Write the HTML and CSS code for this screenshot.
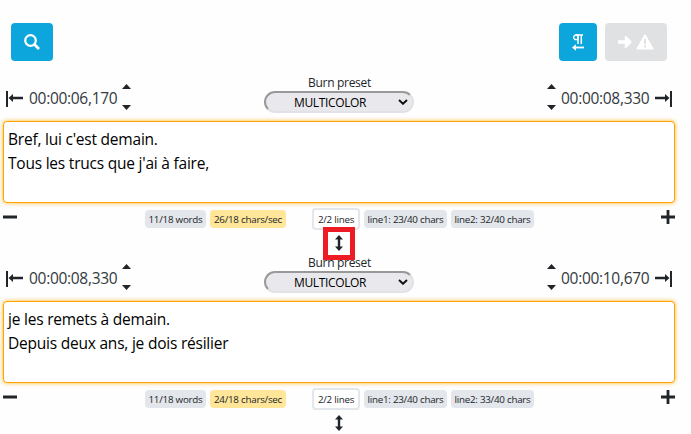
FILE: index.html
```html
<!DOCTYPE html>
<html lang="fr">
<head>
<meta charset="utf-8">
<title>Subtitles</title>
<link rel="stylesheet" href="styles.css">
</head>
<body>
<svg class="defs" width="0" height="0">
  <symbol id="start" viewBox="0 0 18 18"><path d="M2 2v16" stroke="#212529" stroke-width="2"/><path d="M3.500 9l4.500-4v2.800h10v2.500H8V13z" fill="#212529"/></symbol>
  <symbol id="end" viewBox="0 0 18 18"><path d="M17 2v16" stroke="#212529" stroke-width="2"/><path d="M15.500 9L11 5v2.800H1v2.500h10V13z" fill="#212529"/></symbol>
  <symbol id="carets" viewBox="0 0 9 26"><path d="M0 5L4.500 0 9 5zM0 21h9l-4.500 5z" fill="#212529"/></symbol>
  <symbol id="chev" viewBox="0 0 10 6"><path d="M1 1l4 3.800L9 1" fill="none" stroke="#111" stroke-width="1.900"/></symbol>
  <symbol id="updown" viewBox="0 0 8 16"><path d="M4 0l4 4.500H5.200v7H8L4 16 0 11.500h2.800v-7H0z" fill="#212529"/></symbol>
  <symbol id="minus" viewBox="0 0 14 14"><path d="M0 7h14" stroke="#212529" stroke-width="3"/></symbol>
  <symbol id="plus" viewBox="0 0 14 14"><path d="M0 7h14M7 0v14" stroke="#212529" stroke-width="2.800"/></symbol>
</svg>
<header class="toolbar">
  <button class="btn search" aria-label="Search"><svg width="16" height="16" viewBox="0 0 16 16" fill="none" stroke="#fff"><circle cx="6.500" cy="6.500" r="5.300" stroke-width="2.200"/><path d="M10.500 10.500l4.500 4.500" stroke-width="2.800"/></svg></button>
  <button class="btn para" aria-label="Paragraph"><svg width="12" height="17" viewBox="0 0 12 17" fill="none" stroke="#fff"><path d="M3.500 1H11M6 1v9M9.300 1v9" stroke-width="1.500"/><path d="M6 1H4a2.300 2.300 0 0 0 0 4.600h2z" stroke-width="1.300"/><path d="M3 13.500h9" stroke-width="1.800"/><path d="M0 13.500l4-3.200v6.400z" fill="#fff" stroke="none"/></svg></button>
  <button class="btn next" aria-label="Next warning"><svg width="14" height="14" viewBox="0 0 14 14"><path d="M0 5.200h6.800V1.200q.4-1 1.400-.2L14 7l-5.800 6q-1 .8-1.400-.2V8.800H0z" fill="#fff"/></svg><svg width="18" height="16" viewBox="0 0 18 16"><path d="M9 1.200l7.800 13.600H1.200z" fill="#fff" stroke="#fff" stroke-width="1.600" stroke-linejoin="round"/><path d="M9 5v5M9 11.500v2" stroke="#e0e1e3" stroke-width="2"/></svg></button>
</header>
<main>
  <section class="cue">
    <div class="head">
      <div class="time"><svg width="18" height="18"><use href="#start"/></svg><span class="code">00:00:06,170</span><svg class="carets" width="9" height="26"><use href="#carets"/></svg></div>
      <div class="preset"><span class="label">Burn preset</span><div class="select"><span>MULTICOLOR</span><svg width="10" height="6"><use href="#chev"/></svg></div></div>
      <div class="time right"><svg class="carets" width="9" height="26"><use href="#carets"/></svg><span class="code">00:00:08,330</span><svg width="18" height="18"><use href="#end"/></svg></div>
    </div>
    <div class="text">Bref, lui c'est demain.<br>Tous les trucs que j'ai à faire,</div>
    <div class="foot">
      <svg class="adjust" width="14" height="14"><use href="#minus"/></svg>
      <span class="badge words">11/18 words</span><span class="badge rate">26/18 chars/sec</span><span class="badge lines">2/2 lines</span><span class="badge line">line1: 23/40 chars</span><span class="badge line">line2: 32/40 chars</span>
      <svg class="adjust last" width="14" height="14"><use href="#plus"/></svg>
    </div>
    <div class="swap"><svg width="8" height="16"><use href="#updown"/></svg><i class="marker"></i></div>
  </section>
  <section class="cue">
    <div class="head">
      <div class="time"><svg width="18" height="18"><use href="#start"/></svg><span class="code">00:00:08,330</span><svg class="carets" width="9" height="26"><use href="#carets"/></svg></div>
      <div class="preset"><span class="label">Burn preset</span><div class="select"><span>MULTICOLOR</span><svg width="10" height="6"><use href="#chev"/></svg></div></div>
      <div class="time right"><svg class="carets" width="9" height="26"><use href="#carets"/></svg><span class="code">00:00:10,670</span><svg width="18" height="18"><use href="#end"/></svg></div>
    </div>
    <div class="text">je les remets à demain.<br>Depuis deux ans, je dois résilier</div>
    <div class="foot">
      <svg class="adjust" width="14" height="14"><use href="#minus"/></svg>
      <span class="badge words">11/18 words</span><span class="badge rate">24/18 chars/sec</span><span class="badge lines">2/2 lines</span><span class="badge line">line1: 23/40 chars</span><span class="badge line">line2: 33/40 chars</span>
      <svg class="adjust last" width="14" height="14"><use href="#plus"/></svg>
    </div>
    <div class="swap"><svg width="8" height="16"><use href="#updown"/></svg></div>
  </section>
</main>
</body>
</html>
```
FILE: styles.css
```css
* { box-sizing: border-box; }
body { margin: 0; height: 434px; overflow: hidden; background: #fefefe; color: #212529; font-family: "Open Sans", "Noto Sans", sans-serif; }
svg { display: block; flex: none; }
.defs { position: absolute; }
.toolbar { display: flex; height: 72px; padding: 23px 24px 0 11px; }
.btn { display: flex; align-items: center; justify-content: center; height: 38px; padding: 0; border: 0; border-radius: 4px; background: #0ca6dc; }
.search { width: 42px; }
.para { width: 38px; margin-left: auto; }
.next { width: 62px; margin-left: 8px; gap: 4px; background: #e0e1e3; }
.cue { height: 180px; }
.head { display: flex; justify-content: space-between; height: 49px; width: 678px; padding: 0 5px; }
.time { display: flex; align-items: center; height: 52px; width: 126px; }
.code { width: 88px; margin-left: 6px; font-size: 15.5px; letter-spacing: -0.3px; line-height: 20px; white-space: nowrap; color: #333a40; }
.time .carets { margin: 0 0 2px 5px; }
.time.right .carets { margin-left: 0; }
.time.right .code { margin: 0 5px 0 5px; }
.preset { width: 150px; padding-top: 3px; text-align: center; }
.label { display: block; height: 16px; line-height: 16px; font-size: 12px; letter-spacing: -0.3px; padding-left: 1px; }
.select { display: flex; align-items: center; justify-content: space-between; height: 22px; padding: 0 4px 0 28px; border: 2px solid; border-color: #999 #e2e2e5 #e2e2e5 #999; border-radius: 11px; background: #e9e9ed; color: #000; font-size: 12px; letter-spacing: -0.35px; }
.text { width: 672px; height: 82px; margin-left: 3px; padding: 5px 4px; border: 1px solid #ffa500; border-radius: 4px; box-shadow: 0 0 4px #ffb52e; background: #fff; color: #000; font-size: 15.5px; letter-spacing: -0.22px; line-height: 24px; }
.foot { display: flex; align-items: center; height: 32px; width: 675px; padding-left: 3px; }
.badge { display: flex; align-items: center; justify-content: center; height: 18px; margin-right: 4px; border-radius: 4px; background: #e3e6eb; font-size: 9.8px; letter-spacing: -0.25px; white-space: nowrap; }
.words { width: 61px; margin-left: 128px; }
.rate { width: 76px; margin-right: 26px; background: #ffe699; }
.lines { width: 48px; height: 22px; border: 2px solid #e3e6eb; background: #fff; }
.line { width: 83px; }
.adjust { margin-bottom: 4px; }
.last { margin-left: auto; }
.swap { position: relative; display: flex; justify-content: center; width: 678px; height: 17px; }
.marker { position: absolute; left: 323px; top: -8px; width: 32px; height: 33px; border: 5px solid #ed1c24; }
```
